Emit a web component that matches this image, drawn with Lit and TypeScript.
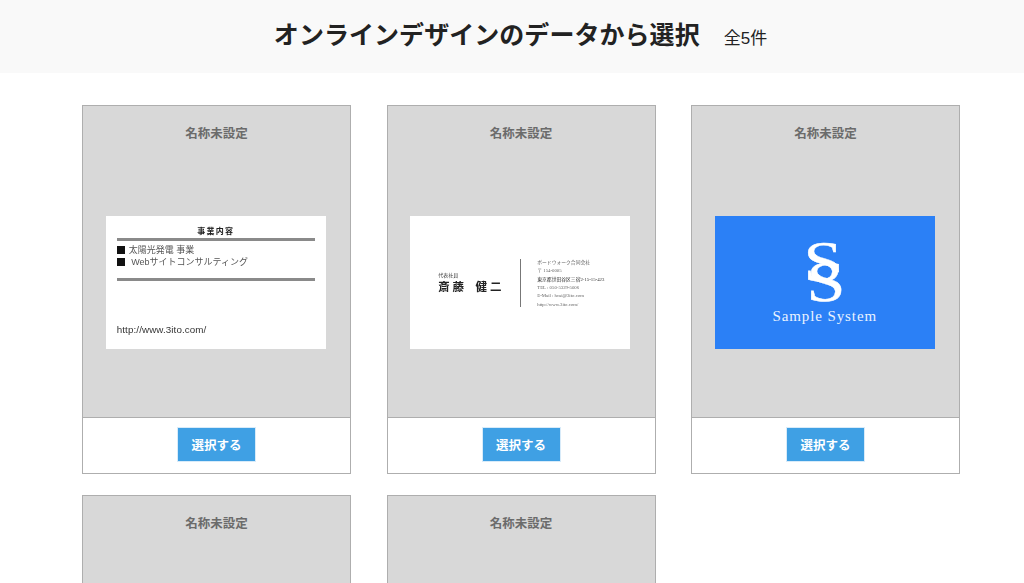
import { LitElement, html, css } from "lit";
import { customElement } from "lit/decorators.js";

@customElement("app-root")
export class AppRoot extends LitElement {
  static styles = css`
    :host { display: block; height: 583px; overflow: hidden; background: #fff;
      font-family: "Liberation Sans", "Noto Sans CJK JP", sans-serif; color: #222; }
    * { box-sizing: border-box; }
    header { height: 73px; background: #f9f9f9; display: flex; justify-content: center; align-items: center; gap: 24px; padding: 0 0 2px 17px; }
    h1 { margin: 0; font-size: 25px; font-weight: 700; color: #222; line-height: 1; letter-spacing: .05px; }
    .count { font-size: 17px; padding-top: 5px; line-height: 1; color: #222; }
    main { display: grid; grid-template-columns: repeat(3, 269px); column-gap: 35.5px; row-gap: 21px; padding: 32px 0 0 82px; }
    .card { border: 1px solid #aeaeae; background: #fff; height: 369px; display: flex; flex-direction: column; }
    .thumb { height: 312px; background: #d8d8d8; border-bottom: 1px solid #aeaeae; display: flex; flex-direction: column; align-items: center; }
    .name { font-size: 12.5px; font-weight: 700; color: #6b6b6b; line-height: 15px; margin-top: 21px; height: 89px; }
    .foot { flex: 1; display: flex; align-items: center; justify-content: center; padding-bottom: 2px; }
    .btn { width: 79px; height: 35px; border: 1px solid #d8ebf9; background: #3fa0e4; color: #fff; font: 700 12.5px "Liberation Sans", "Noto Sans CJK JP", sans-serif; padding: 0; }
    .biz { width: 220px; height: 133px; margin-right: 1.5px; background: #fff; overflow: hidden; }

    .b1 { padding: 11px 11px 0; display: flex; flex-direction: column; filter: blur(0.4px); }
    .b1 .t { text-align: center; font-size: 8px; font-weight: 700; line-height: 10px; letter-spacing: 1.2px; color: #222; }
    .b1 .rule { height: 3px; background: #8a8a8a; flex: none; }
    .b1 .r1 { margin-top: 1px; }
    .b1 .row { display: flex; align-items: center; font-size: 9px; line-height: 12px; color: #555; }
    .b1 .rows { margin-top: 3px; height: 34px; }
    .b1 i { width: 8px; height: 8px; background: #111; margin-right: 4px; flex: none; }
    .b1 .url { margin-top: 43px; font-size: 9.8px; line-height: 11px; color: #333; letter-spacing: .1px; }

    .b2 { display: flex; align-items: center; filter: blur(0.5px); font-family: "Liberation Serif", "Noto Sans CJK JP", serif; color: #666; }
    .b2 .l { width: 110px; padding-left: 28px; }
    .b2 .small { font-size: 5px; line-height: 7px; color: #444; }
    .b2 .big { font-size: 11.5px; line-height: 14px; font-weight: 700; color: #222; white-space: pre; margin-top: 1px; }
    .b2 .div { width: 1px; height: 48px; background: #777; margin-right: 16px; }
    .b2 .r { font-size: 4.8px; line-height: 8.4px; white-space: nowrap; margin-top: 3px; }
    .b2 .r b { color: #333; font-weight: 400; }

    .b3 { background: #2b80f6; color: #fff; font-family: "Liberation Serif", serif; display: flex; flex-direction: column; align-items: center; }
    .logo { position: relative; width: 60px; height: 92px; flex: none; }
    .logo span { position: absolute; font-size: 56px; line-height: 56px; left: 50%; -webkit-text-stroke: .4px #fff; transform: translateX(-50%) scaleX(1.25); }
    .logo .s1 { top: 18px; margin-left: -2px; }
    .logo .s2 { top: 38px; margin-left: 1px; }
    .b3 .nm { font-size: 15px; line-height: 16px; letter-spacing: .9px; color: #eaf3ff; }
  `;

  card(inner: unknown) {
    return html`<div class="card">
      <div class="thumb"><div class="name">名称未設定</div>${inner}</div>
      <div class="foot"><button class="btn">選択する</button></div>
    </div>`;
  }

  render() {
    const c1 = html`<div class="biz b1">
      <div class="t">事業内容</div>
      <div class="rule r1"></div>
      <div class="rows">
        <div class="row"><i></i>太陽光発電 事業</div>
        <div class="row"><i></i>&nbsp;Webサイトコンサルティング</div>
      </div>
      <div class="rule"></div>
      <div class="url">http://www.3ito.com/</div>
    </div>`;
    const c2 = html`<div class="biz b2">
      <div class="l"><div class="small">代表社員</div><div class="big">斎 藤　健 二</div></div>
      <div class="div"></div>
      <div class="r">
        <div>ボードウォーク合同会社</div>
        <div>〒 154-0005</div>
        <div><b>東京都世田谷区三宿2-15-15-423</b></div>
        <div>TEL : 050-5329-5006</div>
        <div>E-Mail : hcai@3ito.com</div>
        <div>http://www.3ito.com/</div>
      </div>
    </div>`;
    const c3 = html`<div class="biz b3">
      <div class="logo"><span class="s1">S</span><span class="s2">S</span></div>
      <div class="nm">Sample System</div>
    </div>`;
    return html`
      <header><h1>オンラインデザインのデータから選択</h1><span class="count">全5件</span></header>
      <main>
        ${this.card(c1)}${this.card(c2)}${this.card(c3)}
        ${this.card("")}${this.card("")}
      </main>`;
  }
}
